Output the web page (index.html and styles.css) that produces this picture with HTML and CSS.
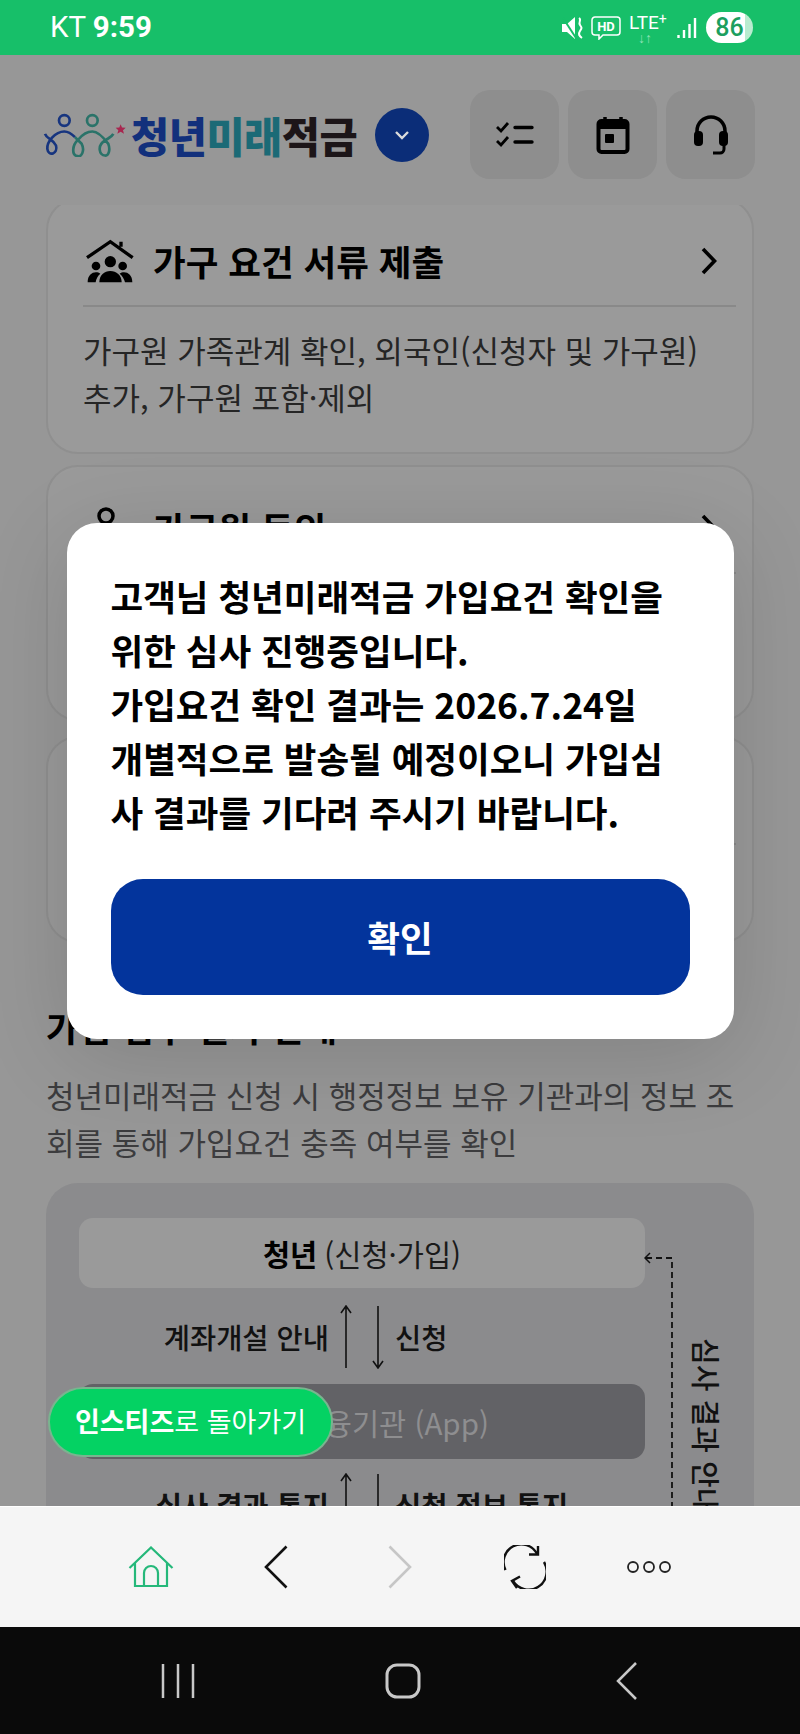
FILE: index.html
```html
<!DOCTYPE html>
<html lang="ko">
<head>
    <meta charset="UTF-8">
    <meta name="viewport" content="width=device-width, initial-scale=1.0">
    <title>청년미래적금</title>
    <link rel="stylesheet" href="styles.css">
</head>
<body>
<div class="phone">
    <div class="status">
        <div class="status-left">KT <b>9:59</b></div>
        <div class="status-right">
            <svg class="st-mute" width="22" height="22" viewBox="0 0 22 22">
                <path d="M0 7h5l8-7v22l-8-7H0z" fill="#fff"/>
                <path d="M1 1l13 20" stroke="#17bf69" stroke-width="2"/>
                <path d="M17 1c3 2-1 4 1 7s2 3 0 6-1 5 2 7" fill="none" stroke="#fff" stroke-width="2"/>
            </svg>
            <svg class="st-hd" width="30" height="24" viewBox="0 0 30 24">
                <path d="M4 1h22a3 3 0 0 1 3 3v12a3 3 0 0 1-3 3H12l-4 4v-4H4a3 3 0 0 1-3-3V4a3 3 0 0 1 3-3z" fill="none" stroke="#fff" stroke-width="1.5"/>
                <text x="15" y="15" text-anchor="middle" class="st-hd-text">HD</text>
            </svg>
            <div class="st-lte">LTE<sup>+</sup><span>↓↑</span></div>
            <svg class="st-signal" width="20" height="20" viewBox="0 0 20 20">
                <path d="M1.5 17v3M7 12v8M12.5 6v14M18 0v20" stroke="#fff" stroke-width="2.4" fill="none"/>
            </svg>
            <div class="st-battery">86</div>
        </div>
    </div>

    <div class="page">
        <div class="top">
            <div class="logo">
                <svg class="logo-mark" width="86" height="44" viewBox="0 0 86 44">
                    <g transform="translate(-3 -7.5) scale(.3333)" fill="none" stroke-width="8">
                        <circle cx="73" cy="45" r="16" stroke="#17357f"/>
                        <circle cx="157" cy="45" r="16" stroke="#2a7369"/>
                        <path d="M15 85C20 100 38 100 48 120C55 145 25 155 22 130C20 110 45 78 73 78C85 78 95 85 105 95" stroke="#17357f"/>
                        <path d="M105 95C112 102 118 108 125 115C135 135 125 155 113 152C95 150 95 120 115 102C125 90 140 78 157 78C175 78 190 95 205 115C212 135 205 152 195 150C178 150 170 120 195 105C205 98 215 95 220 85" stroke="#2a7369"/>
                        <path d="M242 56l4 10 11 1-8 7 3 11-10-6-10 6 3-11-8-7 11-1z" fill="#a8264f" stroke="none"/>
                    </g>
                </svg>
                <div class="logo-text"><span class="navy">청년</span><span class="teal">미래</span><span class="ink">적금</span></div>
                <div class="logo-more">
                    <svg width="16" height="10" viewBox="0 0 16 10"><path d="M2 2l6 6 6-6" fill="none" stroke="#dcdcdc" stroke-width="2.4"/></svg>
                </div>
            </div>
            <div class="top-btns">
                <div class="top-btn">
                    <svg width="38" height="28" viewBox="0 0 38 28">
                        <path d="M1 6l4 4 7-8M1 20l4 4 7-8" fill="none" stroke="#000" stroke-width="2.8"/>
                        <path d="M19 6.5h17M19 21h17" stroke="#000" stroke-width="3.4" stroke-linecap="round"/>
                    </svg>
                </div>
                <div class="top-btn">
                    <svg width="34" height="38" viewBox="0 0 34 38">
                        <path d="M9 1v6M25 1v6" stroke="#000" stroke-width="3.5"/>
                        <rect x="2.5" y="5" width="29" height="31" rx="3" fill="none" stroke="#000" stroke-width="4"/>
                        <rect x="2.5" y="5" width="29" height="8" fill="#000"/>
                        <rect x="9" y="18" width="9" height="9" rx="1" fill="#000"/>
                    </svg>
                </div>
                <div class="top-btn">
                    <svg width="36" height="42" viewBox="0 0 36 42">
                        <path d="M4 22V17a14 14 0 0 1 28 0v5" fill="none" stroke="#000" stroke-width="3.5"/>
                        <rect x="1" y="17" width="9" height="15" rx="4" fill="#000"/>
                        <rect x="26" y="17" width="9" height="15" rx="4" fill="#000"/>
                        <path d="M31 30v5a4 4 0 0 1-4 4h-7" fill="none" stroke="#000" stroke-width="3"/>
                    </svg>
                </div>
            </div>
        </div>

        <div class="scroll">
            <div class="card card-first">
                <div class="card-head">
                    <svg class="card-icon" width="48" height="44" viewBox="0 0 48 44">
                        <g transform="scale(.3333) translate(-15 -22)">
                            <path d="M18 78L88 30L155 78M120 45V30" fill="none" stroke="#000" stroke-width="10"/>
                            <circle cx="88" cy="90" r="17" fill="#000"/>
                            <circle cx="45" cy="103" r="13" fill="#000"/>
                            <circle cx="125" cy="103" r="13" fill="#000"/>
                            <path d="M55 152C55 130 70 118 88 118C106 118 122 130 122 152z" fill="#000"/>
                            <path d="M20 152C20 132 32 122 45 122C50 122 54 123 58 126C50 133 45 142 44 152zM154 152C154 132 142 122 129 122C124 122 120 123 116 126C124 133 130 142 132 152z" fill="#000"/>
                        </g>
                    </svg>
                    <h2 class="card-title">가구 요건 서류 제출</h2>
                    <svg class="card-arrow" width="16" height="28" viewBox="0 0 16 28"><path d="M2 2l11.500 12L2 26" fill="none" stroke="#000" stroke-width="3.6"/></svg>
                </div>
                <p class="card-desc">가구원 가족관계 확인, 외국인(신청자 및 가구원) 추가, 가구원 포함·제외</p>
            </div>

            <div class="card">
                <div class="card-head">
                    <svg class="card-icon" width="48" height="44" viewBox="0 0 48 44">
                        <circle cx="20" cy="10" r="7" fill="none" stroke="#000" stroke-width="3.5"/>
                        <path d="M5 38c0-10 6-16 15-16s15 6 15 16" fill="none" stroke="#000" stroke-width="3.5"/>
                    </svg>
                    <h2 class="card-title">가구원 동의</h2>
                    <svg class="card-arrow" width="16" height="28" viewBox="0 0 16 28"><path d="M2 2l11.500 12L2 26" fill="none" stroke="#000" stroke-width="3.6"/></svg>
                </div>
                <p class="card-desc">가구원 정보 제공 동의 진행 및 동의 현황 확인</p>
            </div>

            <div class="card card-short">
                <div class="card-head">
                    <h2 class="card-title">가입 심사 현황</h2>
                </div>
                <p class="card-desc">가입 심사 진행 상태 확인</p>
            </div>

            <h2 class="section-title">가입 접수 절차 안내</h2>
            <p class="section-desc">청년미래적금 신청 시 행정정보 보유 기관과의 정보 조회를 통해 가입요건 충족 여부를 확인</p>

            <div class="diagram">
                <svg class="return-line" width="34" height="260" viewBox="0 0 34 260">
                    <path d="M6 1l-5 5 5 5" fill="none" stroke="#111" stroke-width="1.5"/>
                    <path d="M2 6h26v254" fill="none" stroke="#111" stroke-width="1.8" stroke-dasharray="6 4"/>
                </svg>
                <div class="return-label">심사 결과 안내</div>
                <div class="flow">
                    <div class="flow-box"><b>청년</b> (신청·가입)</div>
                    <div class="flow-row">
                        <span class="flow-left">계좌개설 안내</span>
                        <svg width="44" height="64" viewBox="0 0 44 64">
                            <path d="M6 63V1M1 8l5-7 5 7M38 1v62M33 56l5 7 5-7" fill="none" stroke="#111" stroke-width="1.6"/>
                        </svg>
                        <span class="flow-right">신청</span>
                    </div>
                    <div class="flow-box flow-box-dark">취급 금융기관 (App)</div>
                    <div class="flow-row">
                        <span class="flow-left flow-bold">심사 결과 통지</span>
                        <svg width="44" height="64" viewBox="0 0 44 64">
                            <path d="M6 63V1M1 8l5-7 5 7M38 1v62M33 56l5 7 5-7" fill="none" stroke="#111" stroke-width="1.6"/>
                        </svg>
                        <span class="flow-right flow-bold">신청 정보 통지</span>
                    </div>
                </div>
            </div>
        </div>

        <div class="back-pill"><b>인스티즈</b>로 돌아가기</div>

        <div class="overlay">
            <div class="modal">
                <p class="modal-text">고객님 청년미래적금 가입요건 확인을 위한 심사 진행중입니다.<br>가입요건 확인 결과는 2026.7.24일<br>개별적으로 발송될 예정이오니 가입심사 결과를 기다려 주시기 바랍니다.</p>
                <button class="modal-btn" type="button">확인</button>
            </div>
        </div>
    </div>

    <div class="toolbar">
        <div class="tool">
            <svg width="46" height="42" viewBox="0 0 46 42">
                <path d="M1.5 22L23 1.5 44.5 22M7 17v23h32V17M16 40V27a7 7 0 0 1 14 0v13" fill="none" stroke="#25b87a" stroke-width="2.2"/>
            </svg>
        </div>
        <div class="tool">
            <svg width="24" height="44" viewBox="0 0 24 44"><path d="M22.5 1.5L2 22l20.5 20.5" fill="none" stroke="#111" stroke-width="2.6"/></svg>
        </div>
        <div class="tool">
            <svg width="24" height="44" viewBox="0 0 24 44"><path d="M1.5 1.5L22 22 1.5 42.5" fill="none" stroke="#c6c6c6" stroke-width="2.6"/></svg>
        </div>
        <div class="tool">
            <svg width="42" height="44" viewBox="0 0 42 44" fill="none" stroke="#111" stroke-width="2.4">
                <path d="M1.5 25A17 17 0 0 1 33 9"/>
                <path d="M34 1V9.5H25"/>
                <path d="M40 17A17 17 0 0 1 9 36"/>
                <path d="M16 31.5L8 36L13 43"/>
            </svg>
        </div>
        <div class="tool">
            <svg width="46" height="14" viewBox="0 0 46 14">
                <circle cx="7" cy="7" r="5" fill="none" stroke="#222" stroke-width="1.8"/>
                <circle cx="23" cy="7" r="5" fill="none" stroke="#222" stroke-width="1.8"/>
                <circle cx="39" cy="7" r="5" fill="none" stroke="#222" stroke-width="1.8"/>
            </svg>
        </div>
    </div>

    <div class="navbar">
        <div class="nav-item">
            <svg width="34" height="36" viewBox="0 0 34 36"><path d="M2 1v34M17 1v34M32 1v34" stroke="#c8c8c8" stroke-width="2.5"/></svg>
        </div>
        <div class="nav-item">
            <svg width="36" height="36" viewBox="0 0 36 36"><rect x="2" y="2" width="32" height="32" rx="10" fill="none" stroke="#c8c8c8" stroke-width="3"/></svg>
        </div>
        <div class="nav-item">
            <svg width="22" height="38" viewBox="0 0 22 38"><path d="M20 1L2 19l18 18" fill="none" stroke="#c8c8c8" stroke-width="2.5"/></svg>
        </div>
    </div>
</div>
</body>
</html>
```

FILE: styles.css
```css
* {
    box-sizing: border-box;
}
body {
    margin: 0;
    font-family: "Noto Sans CJK KR", "Noto Sans", sans-serif;
    color: #000;
}
.phone {
    width: 800px;
    height: 1734px;
    display: flex;
    flex-direction: column;
    overflow: hidden;
    background: #979797;
}

/* status bar */
.status {
    height: 55px;
    flex: none;
    background: #17bf69;
    color: #fff;
    display: flex;
    align-items: center;
    justify-content: space-between;
    padding: 0 47px 0 50px;
    font-family: Roboto, sans-serif;
}
.status-left {
    font-size: 29.5px;
    margin-top: -1px;
}
.status-right {
    display: flex;
    align-items: center;
}
.st-mute {
    margin-right: 7px;
}
.st-hd {
    margin-right: 8px;
}
.st-hd-text {
    font-family: Roboto, sans-serif;
    font-size: 13px;
    font-weight: 700;
    fill: #fff;
}
.st-lte {
    position: relative;
    width: 48px;
    height: 30px;
    font-size: 19px;
    line-height: 20px;
}
.st-lte sup {
    font-size: 14px;
    line-height: 0;
    vertical-align: 5px;
}
.st-lte span {
    position: absolute;
    left: 9px;
    top: 15px;
    font-size: 14px;
    font-weight: 700;
    color: #8fe2b8;
}
.st-signal {
    margin-right: 9px;
}
.st-battery {
    width: 47px;
    height: 31px;
    border-radius: 16px;
    background: linear-gradient(90deg, #fff 84%, #b9ecd0 84%);
    color: #1c9f5f;
    font-size: 25px;
    font-weight: 500;
    line-height: 31px;
    text-align: center;
}

/* page behind the dialog */
.page {
    flex: 1;
    min-height: 0;
    position: relative;
    display: flex;
    flex-direction: column;
}
.top {
    height: 150px;
    flex: none;
    display: flex;
    align-items: center;
    justify-content: space-between;
    padding: 9px 45px 0 43px;
}
.logo {
    display: flex;
    align-items: center;
}
.logo-mark {
    margin-right: 2px;
}
.logo-text {
    font-size: 41.5px;
    font-weight: 900;
    letter-spacing: -0.5px;
    line-height: 44px;
}
.navy {
    color: #12307c;
}
.teal {
    color: #1b6a76;
}
.ink {
    color: #1c1518;
}
.logo-more {
    width: 54px;
    height: 54px;
    margin-left: 18px;
    border-radius: 50%;
    background: #0b2d78;
    display: flex;
    align-items: center;
    justify-content: center;
}
.top-btns {
    display: flex;
    gap: 9px;
}
.top-btn {
    width: 89px;
    height: 89px;
    border-radius: 20px;
    background: #8e8e8e;
    display: flex;
    align-items: center;
    justify-content: center;
}
.scroll {
    flex: 1;
    min-height: 0;
    overflow: hidden;
    padding: 0 46px;
}
.card {
    height: 256px;
    margin-bottom: 15px;
    padding: 0 16px 0 35px;
    background: #9a9a9a;
    border: 2px solid #8f8f8f;
    border-radius: 32px;
}
.card-first {
    margin-top: -7px;
    margin-bottom: 11px;
}
.card-short {
    height: 207px;
}
.card-head {
    height: 107px;
    border-bottom: 2px solid #898989;
    display: flex;
    align-items: center;
    gap: 19px;
    padding: 16px 19px 0 3px;
}
.card-icon {
    flex: none;
}
.card-title {
    flex: 1;
    margin: 0;
    font-size: 35.5px;
    font-weight: 700;
    line-height: 44px;
}
.card-desc {
    margin: 19px 0 0;
    font-size: 31px;
    line-height: 47px;
    color: #252525;
    word-break: keep-all;
}
.section-title {
    margin: 62px 0 0;
    font-size: 35.5px;
    font-weight: 700;
    line-height: 44px;
}
.section-desc {
    margin: 22px 0 0;
    font-size: 31px;
    line-height: 47px;
    color: #3c3c3e;
}
.diagram {
    position: relative;
    height: 400px;
    margin-top: 18px;
    padding: 35px 33px;
    background: #8b8b8d;
    border-radius: 32px;
}
.flow {
    width: 566px;
}
.flow-box {
    height: 70px;
    border-radius: 14px;
    background: #9a9a9a;
    display: flex;
    align-items: center;
    justify-content: center;
    gap: 7px;
    font-size: 29.5px;
    color: #1a1a1a;
}
.flow-box b {
    color: #000;
}
.flow-box-dark {
    height: 75px;
    margin-top: -1px;
    background: #626266;
    color: #8e8e90;
}
.flow-box-dark + .flow-row {
    margin-top: -3px;
}
.flow-row {
    height: 97px;
    display: grid;
    grid-template-columns: 1fr 44px 1fr;
    align-items: center;
    column-gap: 11px;
    font-size: 28.5px;
    font-weight: 500;
    color: #111;
}
.flow-left {
    text-align: right;
}
.flow-bold {
    font-weight: 700;
}
.return-line {
    position: absolute;
    left: 598px;
    top: 69px;
}
.return-label {
    position: absolute;
    left: 643px;
    top: 155px;
    writing-mode: vertical-rl;
    text-orientation: sideways;
    font-size: 29px;
    font-weight: 500;
    line-height: 36px;
    white-space: nowrap;
    color: #111;
}
.back-pill {
    position: absolute;
    left: 48px;
    top: 1332px;
    width: 285px;
    height: 70px;
    border-radius: 35px;
    border: 2px solid #79b58f;
    background: #04d263;
    color: #fff;
    font-size: 27px;
    line-height: 64px;
    text-align: center;
    white-space: nowrap;
}

/* dialog */
.overlay {
    position: absolute;
    inset: 0;
    display: flex;
    align-items: center;
    justify-content: center;
}
.modal {
    width: 667px;
    height: 516px;
    padding: 46px 44px 44px;
    background: #fff;
    border-radius: 30px;
    box-shadow: 0 16px 90px rgba(0, 0, 0, 0.14);
}
.modal-text {
    margin: 0;
    font-size: 35.5px;
    font-weight: 700;
    line-height: 54px;
}
.modal-btn {
    display: block;
    width: 100%;
    height: 116px;
    margin-top: 40px;
    border: none;
    border-radius: 32px;
    background: #03349c;
    color: #fff;
    font-family: inherit;
    font-size: 35.5px;
    font-weight: 700;
}

/* browser toolbar and system buttons */
.toolbar {
    height: 121px;
    flex: none;
    background: #f5f5f5;
    border-top: 1px solid #fff;
    display: flex;
    align-items: center;
    justify-content: center;
}
.tool {
    width: 124.5px;
    display: flex;
    justify-content: center;
}
.navbar {
    height: 107px;
    flex: none;
    background: #0a0a0a;
    display: flex;
    align-items: center;
    justify-content: center;
    padding-left: 5px;
}
.nav-item {
    width: 224.5px;
    display: flex;
    justify-content: center;
}
```
